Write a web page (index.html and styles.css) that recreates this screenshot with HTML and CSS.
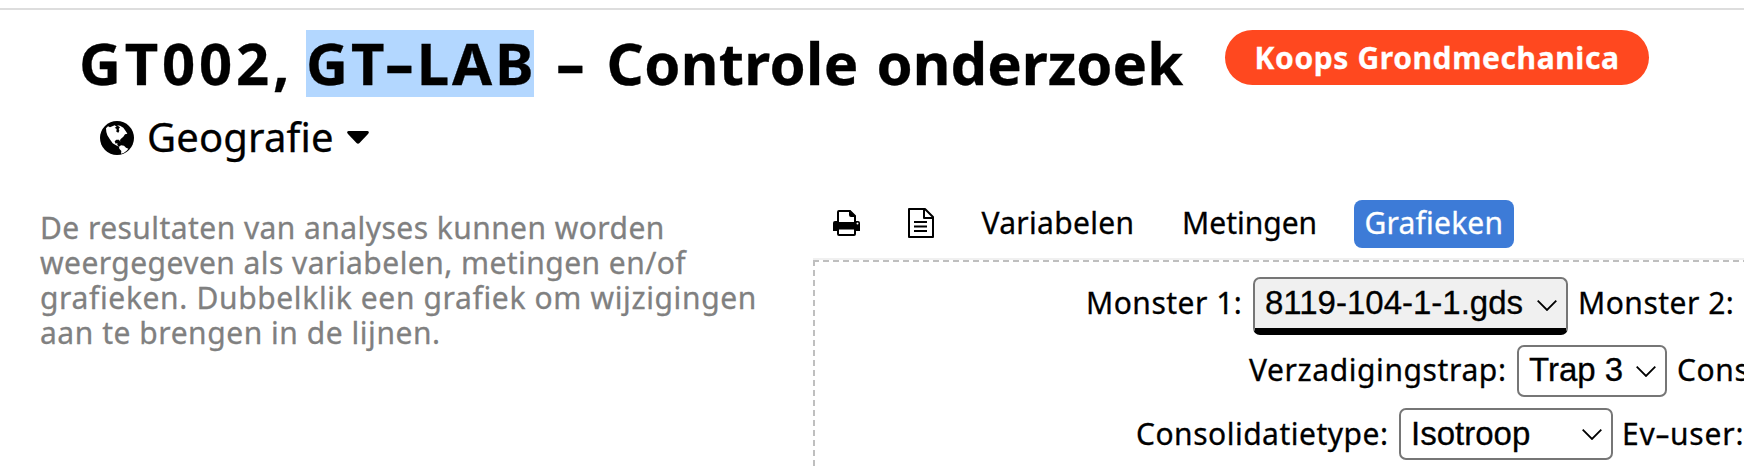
FILE: index.html
```html
<!DOCTYPE html>
<html lang="nl">
<head>
<meta charset="utf-8">
<title>GT002, GT-LAB - Controle onderzoek</title>
<link rel="stylesheet" href="styles.css">
</head>
<body>
<header class="header">
  <div class="title-row">
    <h1 class="title"><span class="code">GT002,</span><mark class="selected">GT<span class="dash">-</span>LAB</mark><span class="dash separator">-</span><span class="word-first">Controle</span><span class="word-last">onderzoek</span></h1>
    <span class="badge">Koops Grondmechanica</span>
  </div>
  <div class="geo">
    <svg class="globe" viewBox="0 0 102 102"><circle cx="51" cy="51" r="51"/><path fill="#fff" d="M18 22L24 16L30 19L44 13L50 17L44 20L50 24L49 32L55 35L58 29L56 24L60 19L51 13L60 14L70 20L79 33L82 38L75 40L70 47L63 53L60 57L61 62L57 56L49 56L44 61L47 68L52 66L52 72L57 77L63 73L72 74L78 80L85 83L80 89L71 96L63 98L64 90L58 83L57 77L48 73L38 67L29 54L22 43L19 33Z"/></svg>
    <span class="geo-label">Geografie</span>
    <svg class="caret" viewBox="0 0 22 13"><path d="M1.5 0H20.500Q23 .8 21 3L12.500 12Q11 13.500 9.500 12L1 3Q-1 .8 1.500 0Z"/></svg>
  </div>
</header>
<main class="content">
  <p class="intro"><span class="l1">De resultaten van analyses kunnen worden</span><br><span class="l2">weergegeven als variabelen, metingen en/of</span><br><span class="l3">grafieken. Dubbelklik een grafiek om wijzigingen</span><br><span class="l4">aan te brengen in de lijnen.</span></p>
  <section class="results">
    <nav class="tabs">
      <svg class="printer" viewBox="0 0 27 26"><path d="M0 13Q0 11 2 11H25Q27 11 27 13V21H0Z"/><path fill="#fff" stroke="#000" stroke-width="2" d="M5 13V2Q5 1 6 1H17L22 6V13M5 18.500H22V24Q22 25 21 25H6Q5 25 5 24Z"/><path d="M16 1L23 7H18Q16 7 16 5ZM4 12H23V18H4Z"/><circle cx="24.500" cy="13.500" r="1" fill="#fff"/></svg>
      <svg class="document" viewBox="0 0 26 30"><path fill="none" stroke="#000" stroke-width="2" stroke-linejoin="round" d="M1 1H17L25 9V29H1ZM16 1V10H25M6 14H19M6 18.500H19M6 23H19"/></svg>
      <a class="tab variables">Variabelen</a>
      <a class="tab measurements">Metingen</a>
      <a class="tab active">Grafieken</a>
    </nav>
    <div class="panel">
      <div class="row row-sample"><span class="label">Monster 1:</span><span class="select current"><span>8119-104-1-1.gds</span><svg class="chevron" viewBox="0 0 20 11"><path d="M.7.7L10 10L19.300.7"/></svg></span><span class="label">Monster 2:</span></div>
      <div class="row row-step"><span class="label">Verzadigingstrap:</span><span class="select step"><span>Trap 3</span><svg class="chevron" viewBox="0 0 20 11"><path d="M.7.7L10 10L19.300.7"/></svg></span><span class="label">Consolidatietrap:</span></div>
      <div class="row row-type"><span class="label">Consolidatietype:</span><span class="select type"><span>Isotroop</span><svg class="chevron" viewBox="0 0 20 11"><path d="M.7.7L10 10L19.300.7"/></svg></span><span class="label user">Ev<span class="dash">-</span>user:</span></div>
    </div>
  </section>
</main>
</body>
</html>
```
FILE: styles.css
```css
* { box-sizing: border-box; }
body {
  margin: 0;
  padding-top: 8px;
  height: 470px;
  overflow: hidden;
  background: #fff;
  color: #000;
  font-family: "Noto Sans", sans-serif;
  font-size: 30px;
  -webkit-text-stroke: .3px currentColor;
}
svg { display: block; flex: none; }
.header { height: 192px; border-top: 2px solid #ddd; padding-top: 12px; }
.title-row { display: flex; align-items: flex-start; height: 80px; padding-left: 79px; white-space: nowrap; }
.title { display: flex; align-items: baseline; margin: 1px 0 0; font-size: 58px; line-height: 80px; font-weight: 700; }
.code { letter-spacing: 3.8px; width: 214px; }
.dash { display: inline-block; transform: scaleX(1.55); }
.selected { margin-left: 13px; width: 228px; line-height: 66px; padding-bottom: 1px; background: #b3d7ff; color: #000; letter-spacing: 2.9px; }
.selected .dash { margin: 0 4px; }
.separator { margin-left: 26.500px; }
.word-first { margin-left: 27.500px; width: 252px; letter-spacing: .35px; }
.word-last { margin-left: 18px; width: 307px; }
.badge { margin: 8px 0 0 41px; width: 424px; height: 55px; border-radius: 28px; background: #ff481f; color: #fff; font-weight: 700; line-height: 56px; letter-spacing: .6px; padding-left: 30px; }
.geo { display: flex; align-items: center; padding: 9px 0 0 100px; height: 59px; font-size: 40px; line-height: 50px; }
.globe { width: 34px; height: 34px; margin-top: 3px; }
.geo-label { width: 187px; margin: 2px 0 0 13px; letter-spacing: .15px; }
.caret { width: 22px; height: 13px; margin: 3px 0 0 13px; }
.content { display: flex; }
.intro { margin: 10px 0 0; padding-left: 40px; width: 813px; flex: none; line-height: 35px; color: #808080; white-space: nowrap; }
.l1 { letter-spacing: .44px; }
.l1, .l2, .l3, .l4 { line-height: 35px; }
.l2 { letter-spacing: .45px; }
.l3 { letter-spacing: .64px; }
.l4 { letter-spacing: .54px; }
.results { width: 931px; overflow: hidden; }
.tabs { display: flex; height: 58px; align-items: flex-start; padding-left: 20px; }
.printer { width: 27px; height: 26px; margin-top: 10px; }
.document { width: 26px; height: 30px; margin: 8px 0 0 48px; }
.tab { line-height: 46px; height: 48px; white-space: nowrap; }
.variables { margin-left: 47.500px; width: 154.500px; letter-spacing: .3px; }
.measurements { margin-left: 46px; width: 136px; }
.active { margin-left: 36px; width: 160px; border-radius: 8px; background: #3d7bd7; color: #fff; padding-left: 10.500px; letter-spacing: .2px; }
.panel { height: 220px; border-top: 2px solid #f0f0f0; background: repeating-linear-gradient(90deg, #bfbfbf 0 6px, transparent 6px 10px) 0 0 / 100% 2px no-repeat, repeating-linear-gradient(180deg, #bfbfbf 0 6px, transparent 6px 10px) 0 0 / 2px 100% no-repeat; padding-top: 17px; }
.row { display: flex; white-space: nowrap; letter-spacing: .5px; }
.label { line-height: 51px; flex: none; }
.row-sample { padding-left: 273px; height: 68px; }
.row-sample .label:first-child { width: 167px; }
.row-step { padding-left: 436px; height: 63px; letter-spacing: .6px; }
.row-step .label { line-height: 49px; }
.row-step .label:first-child { width: 268px; }
.row-type { padding-left: 323px; height: 62px; }
.row-type .label:first-child { width: 263px; }
.select { flex: none; display: flex; align-items: flex-start; justify-content: space-between; height: 52px; margin-right: 10px; padding: 0 9px 0 10px; border: 2px solid #767676; border-radius: 7px; font: 33px/47px "Liberation Sans", sans-serif; letter-spacing: 0; background: #fff; }
.current { width: 315px; height: 58px; border-bottom: 7px solid #000; background: #f0f0f0; }
.step { width: 150px; line-height: 45px; }
.type { width: 214px; margin-right: 9px; }
.chevron { width: 20px; height: 11px; margin-top: 21px; fill: none; stroke: #000; stroke-width: 1.8; }
.step .chevron, .type .chevron { margin-top: 19px; }
.user { letter-spacing: .8px; }
.user .dash { margin: 0 2px; }
```
